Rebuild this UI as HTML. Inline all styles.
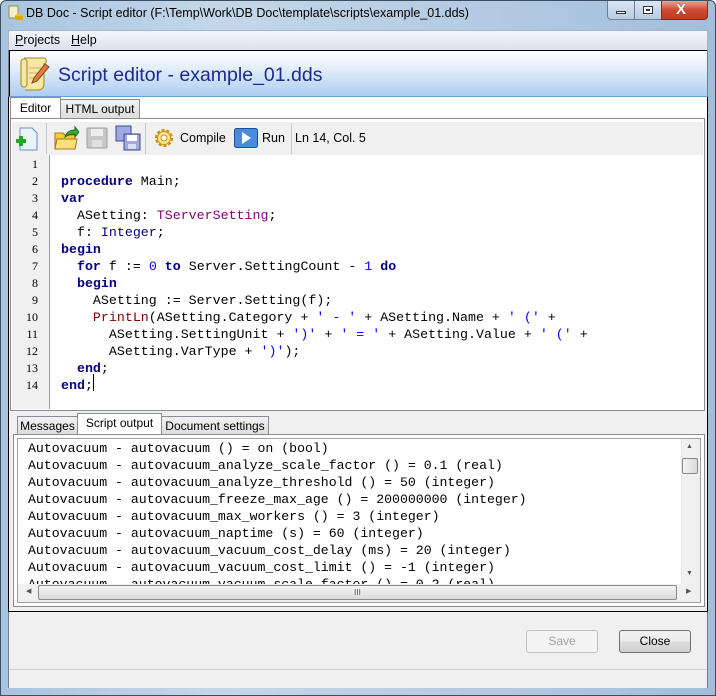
<!DOCTYPE html>
<html><head><meta charset="utf-8"><style>
*{box-sizing:border-box;margin:0;padding:0}
body{width:716px;height:696px;overflow:hidden;font-family:"Liberation Sans",sans-serif;font-size:12px;background:#fff;position:relative}
.abs{position:absolute}
.mono{font-family:"Liberation Mono",monospace}
.kw{color:#000080;font-weight:bold}
.ty{color:#800080}
.tn{color:#000080}
.num{color:#0000ff}
.str{color:#0000ff}
.fn{color:#800000}
.tab{position:absolute;border:1px solid #898c95;border-bottom:none;background:linear-gradient(#f2f2f2,#dcdcdc);font-size:12px;text-align:center;line-height:18px}
.btn{position:absolute;border:1px solid #707070;border-radius:3px;background:linear-gradient(#f2f2f2 0,#ebebeb 50%,#dddddd 51%,#cfcfcf 100%);text-align:center;line-height:21px;font-size:12px}
</style></head><body>
<div class="abs" style="left:0;top:0;width:716px;height:696px;background:linear-gradient(90deg,#a9c4df,#c4d7ea 30%,#b8cde3 60%,#a2bedb);border:1px solid #3c4e62;border-radius:6px 6px 0 0"></div>
<div class="abs" style="left:26px;top:6px;font-size:12.5px;color:#000">DB Doc - Script editor (F:\Temp\Work\DB Doc\template\scripts\example_01.dds)</div>
<svg class="abs" style="left:7px;top:4px" width="16" height="18"><path d="M2 2h9v12H2z" fill="#f5f0c8" stroke="#9a8c50"/><ellipse cx="12" cy="12" rx="4" ry="2" fill="#f0c020"/><rect x="8" y="12" width="8" height="4" fill="#e0a810"/></svg>
<div class="abs" style="left:607px;top:1px;width:28px;height:19px;border:1px solid #6b7f96;border-top:none;border-radius:0 0 0 4px;background:linear-gradient(#dbe6f3,#b7cbe2)"></div>
<div class="abs" style="left:616px;top:11px;width:10px;height:3px;border:1px solid #333;background:#fff"></div>
<div class="abs" style="left:634px;top:1px;width:28px;height:19px;border:1px solid #6b7f96;border-top:none;background:linear-gradient(#dbe6f3,#b7cbe2)"></div>
<div class="abs" style="left:643px;top:6px;width:10px;height:8px;border:1px solid #333;background:#fff"><div style="margin:2px;width:4px;height:2px;border:1px solid #333"></div></div>
<div class="abs" style="left:661px;top:1px;width:47px;height:19px;border:1px solid #7a2f25;border-top:none;border-radius:0 0 4px 0;background:linear-gradient(#e8a597,#cf4a32 50%,#c03a22)"></div>
<div class="abs" style="left:676px;top:1px;color:#fff;font-weight:bold;font-size:15px;text-shadow:0 0 1px #333">X</div>
<div class="abs" style="left:8px;top:30px;width:700px;height:20px;background:linear-gradient(#f4f6fa,#dbe0ef);border:1px solid #a8b4c6;border-bottom:none"></div>
<div class="abs" style="left:15px;top:33px;font-size:12.5px"><u>P</u>rojects</div>
<div class="abs" style="left:71px;top:33px;font-size:12.5px"><u>H</u>elp</div>
<div class="abs" style="left:8px;top:50px;width:700px;height:638px;background:#f0f0f0;border-left:1px solid #6d7f93;border-right:1px solid #6d7f93"></div>
<div class="abs" style="left:9px;top:50px;width:698px;height:47px;background:linear-gradient(#ffffff,#e2eefa 40%,#aecdf0);border-top:1px solid #000;border-left:1px solid #000;border-bottom:1px solid #6a9fd8"></div>
<svg class="abs" style="left:17px;top:56px" width="34" height="36"><path d="M4 6c0-4 6-4 6 0v22c0 4 -6 4 -6 0zM7 2h20c3 0 3 6 0 6v20c0 4-3 6-6 6H8" fill="#f6e7a6" stroke="#b39a3a" stroke-width="1.3"/><path d="M12 12h12M12 17h12M12 22h8" stroke="#c9b56a"/><path d="M28 8l4 3-12 14-5 2 2-5z" fill="#e87a3a" stroke="#7a4a20"/></svg>
<div class="abs" style="left:58px;top:64px;font-size:19.5px;color:#1e2a8e">Script editor - example_01.dds</div>
<div class="abs" style="left:9px;top:97px;width:698px;height:22px;background:#fff"></div>
<div class="tab" style="left:60px;top:99px;width:80px;height:20px">HTML output</div>
<div class="tab" style="left:10px;top:97px;width:51px;height:22px;background:#fff;line-height:20px">Editor</div>
<div class="abs" style="left:10px;top:118px;width:695px;height:293px;border:1px solid #898c95;background:#fff"></div>
<div class="abs" style="left:12px;top:122px;width:691px;height:33px;background:#f0f0f0"></div>
<div class="abs" style="left:46px;top:123px;width:1px;height:31px;background:#c8c8c8"></div>
<div class="abs" style="left:145px;top:123px;width:1px;height:31px;background:#c8c8c8"></div>
<div class="abs" style="left:291px;top:123px;width:1px;height:31px;background:#c8c8c8"></div>
<svg class="abs" style="left:15px;top:127px" width="24" height="24"><path d="M5 1h12l5 5v17H5z" fill="#eaf2fd" stroke="#6a8fc6"/><path d="M1 14h10M6 9v10" stroke="#27a327" stroke-width="4"/></svg>
<svg class="abs" style="left:53px;top:125px" width="26" height="26"><path d="M2 8h8l2 2h10v14H2z" fill="#f4c93a" stroke="#a47a10"/><path d="M4 14h20l-2 10H2z" fill="#fde07a" stroke="#a47a10"/><path d="M12 12c2-6 6-7 10-7V2l4 5-4 5V9c-4 0-7 1-10 3z" fill="#3aaa3a" stroke="#1a6a1a"/></svg>
<svg class="abs" style="left:86px;top:127px" width="22" height="22"><rect x="1" y="1" width="20" height="20" rx="1" fill="#c8c8c8" stroke="#a0a0a0"/><rect x="5" y="2" width="12" height="7" fill="#eee"/><rect x="6" y="13" width="10" height="7" fill="#e0e0e0"/></svg>
<svg class="abs" style="left:115px;top:125px" width="26" height="26"><rect x="1" y="1" width="15" height="15" fill="#9fa8e0" stroke="#3a4a9a"/><rect x="9" y="9" width="16" height="16" fill="#9fa8e0" stroke="#3a4a9a"/><rect x="12" y="10" width="10" height="6" fill="#fff"/><rect x="13" y="19" width="8" height="5" fill="#dde"/></svg>
<svg class="abs" style="left:152px;top:126px" width="24" height="24"><circle cx="12" cy="12" r="8" fill="#fde58a" stroke="#c9901a" stroke-width="2" stroke-dasharray="3 2"/><circle cx="12" cy="12" r="6.5" fill="#fde58a" stroke="#c9901a"/><circle cx="12" cy="12" r="3" fill="#fff" stroke="#c9901a"/></svg>
<div class="abs" style="left:180px;top:131px;font-size:12.5px">Compile</div>
<svg class="abs" style="left:234px;top:128px" width="24" height="20"><rect x="0.5" y="0.5" width="23" height="19" rx="2" fill="#4a8be0" stroke="#1a4fa0"/><path d="M8 4l9 6-9 6z" fill="#fff"/></svg>
<div class="abs" style="left:262px;top:131px;font-size:12.5px">Run</div>
<div class="abs" style="left:295px;top:131px;font-size:12.5px">Ln 14, Col. 5</div>
<div class="abs" style="left:12px;top:155px;width:38px;height:254px;background:#f0f0f0;border-right:1px solid #a0a0a0"></div>
<div class="abs" style="left:14px;top:156px;width:24px;text-align:right;font-family:'Liberation Serif',serif;font-size:12px;line-height:17px">1<br>2<br>3<br>4<br>5<br>6<br>7<br>8<br>9<br>10<br>11<br>12<br>13<br>14</div>
<pre class="abs mono" style="left:61px;top:156px;font-size:13.3px;line-height:17px;color:#000">

<span class="kw">procedure</span> Main;
<span class="kw">var</span>
  ASetting: <span class="ty">TServerSetting</span>;
  f: <span class="tn">Integer</span>;
<span class="kw">begin</span>
  <span class="kw">for</span> f := <span class="num">0</span> <span class="kw">to</span> Server.SettingCount - <span class="num">1</span> <span class="kw">do</span>
  <span class="kw">begin</span>
    ASetting := Server.Setting(f);
    <span class="fn">PrintLn</span>(ASetting.Category + <span class="str">' - '</span> + ASetting.Name + <span class="str">' ('</span> +
      ASetting.SettingUnit + <span class="str">')'</span> + <span class="str">' = '</span> + ASetting.Value + <span class="str">' ('</span> +
      ASetting.VarType + <span class="str">')'</span>);
  <span class="kw">end</span>;
<span class="kw">end</span>;</pre>
<div class="abs" style="left:93px;top:374px;width:1px;height:17px;background:#000"></div>
<div class="tab" style="left:17px;top:416px;width:61px;height:19px">Messages</div>
<div class="tab" style="left:161px;top:416px;width:108px;height:19px">Document settings</div>
<div class="tab" style="left:77px;top:413px;width:85px;height:22px;background:#fff;line-height:18px">Script output</div>
<div class="abs" style="left:13px;top:434px;width:692px;height:173px;border:1px solid #898c95;background:#fff"></div>
<div class="abs" style="left:17px;top:438px;width:684px;height:165px;border:1px solid #a0a0a0;background:#fff;overflow:hidden">
<pre class="mono" style="position:absolute;left:10px;top:1px;font-size:13.2px;line-height:17px;color:#000">Autovacuum - autovacuum () = on (bool)
Autovacuum - autovacuum_analyze_scale_factor () = 0.1 (real)
Autovacuum - autovacuum_analyze_threshold () = 50 (integer)
Autovacuum - autovacuum_freeze_max_age () = 200000000 (integer)
Autovacuum - autovacuum_max_workers () = 3 (integer)
Autovacuum - autovacuum_naptime (s) = 60 (integer)
Autovacuum - autovacuum_vacuum_cost_delay (ms) = 20 (integer)
Autovacuum - autovacuum_vacuum_cost_limit () = -1 (integer)
Autovacuum - autovacuum_vacuum_scale_factor () = 0.2 (real)</pre>
<div style="position:absolute;left:663px;top:0;width:19px;height:145px;background:#f0f0f0;border-left:1px solid #e6e6e6"></div>
<div style="position:absolute;left:668px;top:4px;font-size:7px;color:#555">▲</div>
<div style="position:absolute;left:664px;top:19px;width:16px;height:16px;border:1px solid #8a8a8a;border-radius:2px;background:linear-gradient(90deg,#f4f4f4,#dadada)"></div>
<div style="position:absolute;left:668px;top:131px;font-size:7px;color:#555">▼</div>
<div style="position:absolute;left:0;top:145px;width:682px;height:18px;background:#f0f0f0"></div>
<div style="position:absolute;left:8px;top:148px;font-size:7px;color:#555">◀</div>
<div style="position:absolute;left:20px;top:146px;width:639px;height:15px;border:1px solid #8a8a8a;border-radius:2px;background:linear-gradient(#f4f4f4,#dadada);text-align:center;font-size:8px;line-height:13px;color:#555">III</div>
<div style="position:absolute;left:668px;top:148px;font-size:7px;color:#555">▶</div>
</div>
<div class="abs" style="left:8px;top:410px;width:700px;height:202px;border-left:1px solid #000;border-right:1px solid #000;border-bottom:1px solid #000;pointer-events:none"></div>
<div class="abs" style="left:8px;top:97px;width:2px;height:314px;border-left:1px solid #000"></div>
<div class="abs" style="left:706px;top:97px;width:2px;height:314px;border-right:1px solid #000"></div>
<div class="btn" style="left:526px;top:630px;width:72px;height:23px;color:#a0a0a0;border-color:#c0c0c0;background:#f4f4f4">Save</div>
<div class="btn" style="left:619px;top:630px;width:72px;height:23px">Close</div>
<div class="abs" style="left:9px;top:669px;width:698px;height:19px;background:#f0f0f0;border-top:1px solid #d0d0d0"></div>
</body></html>
